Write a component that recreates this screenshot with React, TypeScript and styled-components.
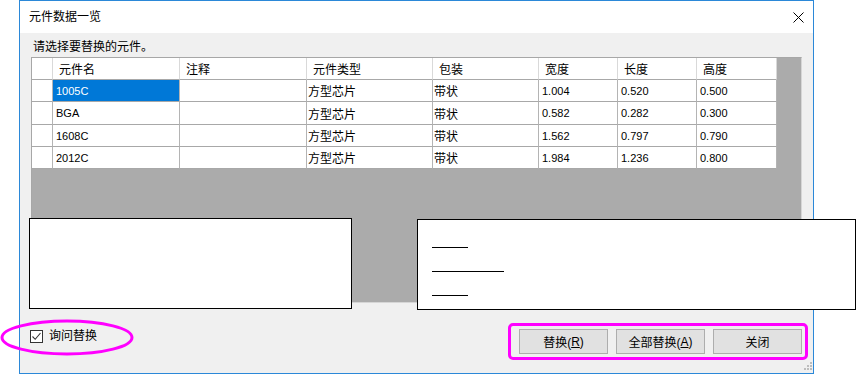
import React from "react";
import styled, { createGlobalStyle } from "styled-components";

const Global = createGlobalStyle`
  html, body { margin: 0; padding: 0; background: #ffffff; }
  body { font-family: "Noto Sans CJK SC", "Liberation Sans", sans-serif; }
`;

const FONT = `"Liberation Sans", "Noto Sans CJK SC", sans-serif`;

const Page = styled.div`
  position: relative;
  width: 856px;
  height: 374px;
  overflow: hidden;
`;

const Window = styled.div`
  position: relative;
  margin-left: 19px;
  width: 795px;
  height: 374px;
  box-sizing: border-box;
  border: 1px solid #2b88d8;
  background: #f0f0f0;
  display: flex;
  flex-direction: column;
  font-family: ${FONT};
  color: #000;
`;

const TitleBar = styled.div`
  height: 32px;
  flex: none;
  background: #ffffff;
  display: flex;
  align-items: center;
  justify-content: space-between;
  padding: 0 9px 0 9px;
`;

const Title = styled.span`
  font-size: 12px;
  line-height: 14px;
`;

const Body = styled.div`
  flex: 1;
  display: flex;
  flex-direction: column;
  padding: 7px 11px 0 11px;
`;

const Prompt = styled.div`
  font-size: 12px;
  line-height: 14px;
  margin: 0 0 3px 2px;
`;

const GridBox = styled.div`
  height: 246px;
  box-sizing: border-box;
  border: 1px solid #a7a7a7;
  border-right-color: #d6d6d6;
  border-bottom-color: #d6d6d6;
  background: #ababab;
`;

const Table = styled.div`
  display: grid;
  grid-template-columns: 21px 127px 127px 126px 106px 79px 79px 80px;
  grid-template-rows: 22px 22px 23px 22px 22px;
  width: 745px;
  background: #ffffff;
`;

const Cell = styled.div<{ $latin?: boolean; $head?: boolean; $selected?: boolean }>`
  box-sizing: border-box;
  border-right: 1px solid ${(p) => (p.$head ? "#d9d9d9" : "#b4b4b4")};
  border-bottom: 1px solid #a8a8a8;
  display: flex;
  align-items: center;
  padding-left: ${(p) => (p.$head ? "6px" : p.$latin ? "3px" : "1px")};
  font-size: ${(p) => (p.$latin ? "11px" : "12px")};
  white-space: nowrap;
  overflow: hidden;
  background: ${(p) => (p.$selected ? "#0078d7" : "#ffffff")};
  color: ${(p) => (p.$selected ? "#ffffff" : "#000000")};
`;

const BottomRow = styled.div`
  margin-top: 26px;
  display: flex;
  justify-content: space-between;
  align-items: flex-start;
`;

const CheckRow = styled.label`
  display: flex;
  align-items: center;
  gap: 6px;
  margin-left: -1px;
  font-size: 12px;
  line-height: 14px;
`;

const CheckBox = styled.span`
  width: 13px;
  height: 13px;
  box-sizing: border-box;
  border: 1px solid #333333;
  background: #ffffff;
  display: flex;
  align-items: center;
  justify-content: center;
`;

const Buttons = styled.div`
  display: flex;
  gap: 8px;
`;

const Button = styled.button`
  width: 89px;
  height: 25px;
  box-sizing: border-box;
  border: 1px solid #adadad;
  background: #e1e1e1;
  font-family: ${FONT};
  font-size: 12px;
  color: #000;
  padding: 0;
  display: flex;
  align-items: center;
  justify-content: center;
`;

const Grip = styled.svg`
  position: absolute;
  right: 1px;
  bottom: 2px;
`;

const AnnoBox = styled.div<{ $left: number; $top: number; $w: number; $h: number }>`
  position: absolute;
  left: ${(p) => p.$left}px;
  top: ${(p) => p.$top}px;
  width: ${(p) => p.$w}px;
  height: ${(p) => p.$h}px;
  box-sizing: border-box;
  border: 1px solid #000000;
  background: #ffffff;
  display: flex;
  flex-direction: column;
  gap: 23px;
  padding: 27px 0 0 14px;
`;

const Redact = styled.div<{ $w: number }>`
  width: ${(p) => p.$w}px;
  height: 1px;
  background: #000000;
`;

const Highlight = styled.div`
  position: absolute;
  left: 508px;
  top: 323px;
  width: 300px;
  height: 37px;
  box-sizing: border-box;
  border: 3px solid #ff00ff;
  border-radius: 5px;
`;

const Ellipse = styled.svg`
  position: absolute;
  left: 0;
  top: 319px;
`;

const headers = ["元件名", "注释", "元件类型", "包装", "宽度", "长度", "高度"];
const rows = [
  ["1005C", "", "方型芯片", "带状", "1.004", "0.520", "0.500"],
  ["BGA", "", "方型芯片", "带状", "0.582", "0.282", "0.300"],
  ["1608C", "", "方型芯片", "带状", "1.562", "0.797", "0.790"],
  ["2012C", "", "方型芯片", "带状", "1.984", "1.236", "0.800"],
];
const latinCols = [0, 4, 5, 6];

export default function App() {
  return (
    <Page>
      <Global />
      <Window>
        <TitleBar>
          <Title>元件数据一览</Title>
          <svg width="11" height="11" viewBox="0 0 11 11">
            <path d="M0.5 0.5 L10.5 10.5 M10.5 0.5 L0.5 10.5" stroke="#000" strokeWidth="1" />
          </svg>
        </TitleBar>
        <Body>
          <Prompt>请选择要替换的元件。</Prompt>
          <GridBox>
            <Table>
              <Cell $head />
              {headers.map((h) => (
                <Cell key={h} $head>
                  {h}
                </Cell>
              ))}
              {rows.map((r, ri) => (
                <React.Fragment key={ri}>
                  <Cell />
                  {r.map((v, ci) => (
                    <Cell key={ci} $latin={latinCols.includes(ci)} $selected={ri === 0 && ci === 0}>
                      {v}
                    </Cell>
                  ))}
                </React.Fragment>
              ))}
            </Table>
          </GridBox>
          <BottomRow>
            <CheckRow>
              <CheckBox>
                <svg width="11" height="11" viewBox="0 0 11 11">
                  <path d="M1.5 5.5 L4.2 8.3 L9.5 2" fill="none" stroke="#333" strokeWidth="1.1" />
                </svg>
              </CheckBox>
              询问替换
            </CheckRow>
            <Buttons>
              <Button>
                替换(<u>R</u>)
              </Button>
              <Button>
                全部替换(<u>A</u>)
              </Button>
              <Button>关闭</Button>
            </Buttons>
          </BottomRow>
        </Body>
        <Grip width="10" height="10" viewBox="0 0 10 10">
          {[
            [8, 0],
            [5, 3],
            [8, 3],
            [2, 6],
            [5, 6],
            [8, 6],
          ].map(([x, y], i) => (
            <rect key={i} x={x} y={y + 1} width="2" height="2" fill="#bdbdbd" />
          ))}
        </Grip>
      </Window>

      <AnnoBox $left={29} $top={218} $w={323} $h={91} />
      <AnnoBox $left={417} $top={219} $w={439} $h={91}>
        <Redact $w={36} />
        <Redact $w={72} />
        <Redact $w={36} />
      </AnnoBox>
      <Ellipse width="136" height="38" viewBox="0 0 136 38">
        <ellipse cx="67" cy="18.5" rx="65" ry="16.5" fill="none" stroke="#ff00ff" strokeWidth="3" />
      </Ellipse>
      <Highlight />
    </Page>
  );
}
